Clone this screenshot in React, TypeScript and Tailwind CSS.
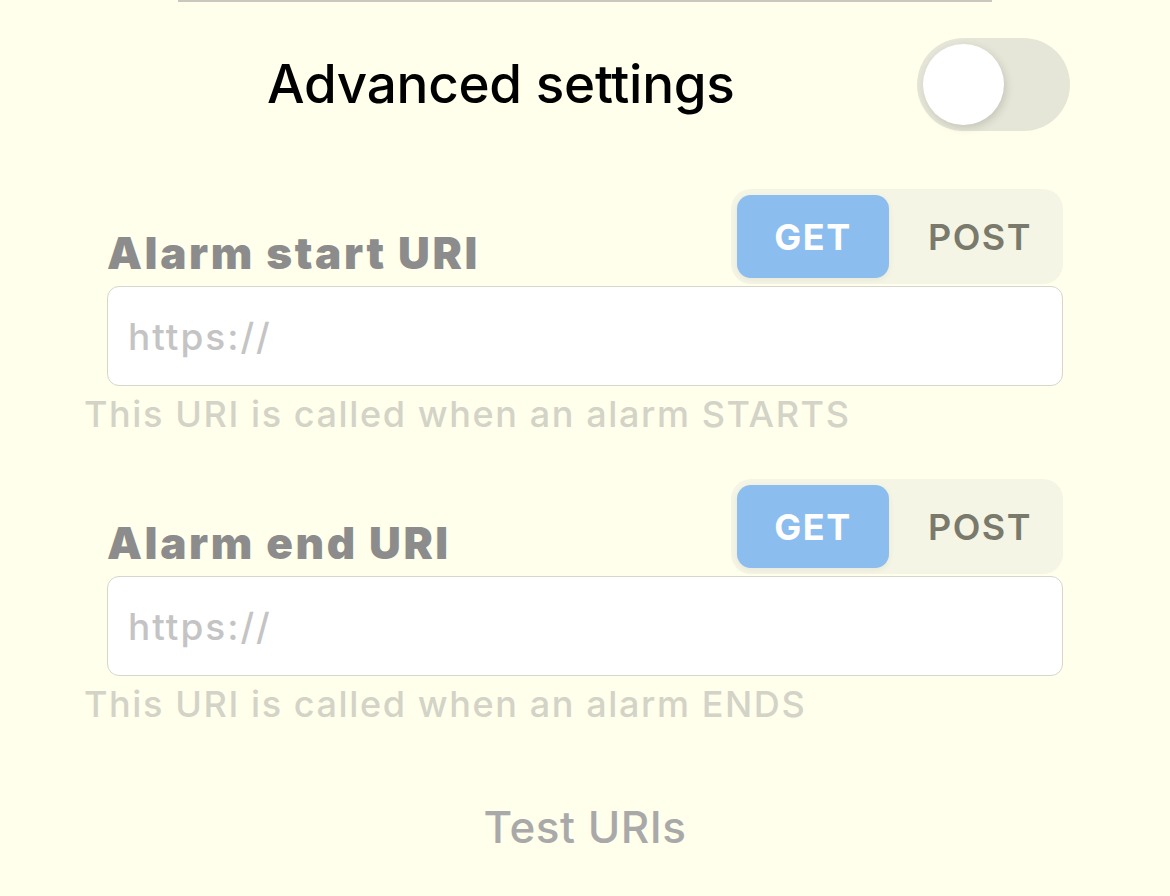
import { useState } from 'react';

type Method = 'GET' | 'POST';

const MethodSwitch = ({ value, onChange }: { value: Method; onChange: (m: Method) => void }) => (
  <div className="flex h-[95px] w-[332px] items-center gap-[6px] rounded-[20px] bg-[#f5f5e5] p-[6px]">
    {(['GET', 'POST'] as Method[]).map((m) => (
      <button
        key={m}
        onClick={() => onChange(m)}
        className={
          m === value
            ? 'flex h-full w-[152px] items-center justify-center rounded-[14px] bg-[#8bbdee] text-[36px] font-bold tracking-[1.5px] text-white shadow-[0_2px_6px_rgba(0,0,0,0.06)]'
            : 'flex h-full flex-1 items-center justify-center pl-[8px] text-[36px] font-semibold tracking-[1.5px] text-[#7a7a6c]'
        }
      >
        {m}
      </button>
    ))}
  </div>
);

const UriField = ({ label, hint }: { label: string; hint: string }) => {
  const [method, setMethod] = useState<Method>('GET');
  return (
    <div className="flex flex-col">
      <div className="flex items-end justify-between">
        <span className="mb-[9px] text-[44px] leading-none font-black tracking-[2.6px] text-[#8c8c8c]">{label}</span>
        <MethodSwitch value={method} onChange={setMethod} />
      </div>
      <input
        type="text"
        placeholder="https://"
        className="mt-[2px] h-[100px] w-full rounded-[12px] border border-[#d6d6cf] bg-white px-[20px] text-[37px] font-medium tracking-[2px] text-[#555] outline-none placeholder:text-[#c4c4c4]"
      />
      <p className="-ml-[23px] mt-[8px] text-[36px] leading-[40px] font-medium tracking-[1.6px] text-[#d3d3c7]">{hint}</p>
    </div>
  );
};

export default function App() {
  const [advanced, setAdvanced] = useState(false);

  return (
    <div className="min-h-[896px] w-full bg-[#ffffeb] font-[Inter,sans-serif]">
      <div className="mx-auto h-[2px] w-[814px] bg-[#c8c8bd]" />

      {/* Advanced toggle */}
      <div className="mt-[36px] flex items-center pl-[267px] pr-[100px]">
        <h2 className="text-[53px] leading-none font-medium tracking-[-0.25px] text-black">Advanced settings</h2>
        <button
          onClick={() => setAdvanced(!advanced)}
          className="ml-auto flex h-[93px] w-[153px] items-center rounded-full bg-[#e6e6d8] p-[6px]"
        >
          <span className="h-[81px] w-[81px] rounded-full bg-white shadow-[2px_3px_8px_rgba(0,0,0,0.15)]" />
        </button>
      </div>

      <div className="mx-auto mt-[58px] flex w-[956px] flex-col gap-[45px]">
        <UriField label="Alarm start URI" hint="This URI is called when an alarm STARTS" />
        <UriField label="Alarm end URI" hint="This URI is called when an alarm ENDS" />
      </div>

      <div className="mt-[70px] flex justify-center">
        <button className="text-[44px] font-medium tracking-[0.5px] text-[#a9a9a9]">Test URIs</button>
      </div>
    </div>
  );
}
